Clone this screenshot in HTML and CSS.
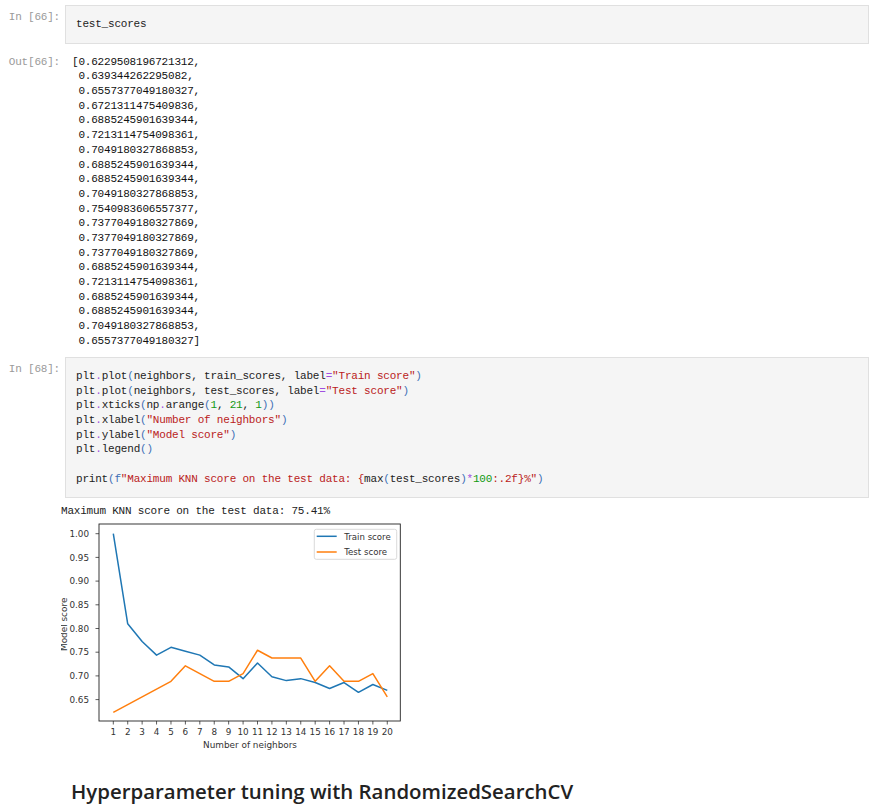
FILE: index.html
```html
<!DOCTYPE html>
<html>
<head>
<meta charset="utf-8">
<link rel="stylesheet" href="styles.css">
</head>
<body>
<div class="nb">
  <div class="cell cell-first">
    <div class="prompt">In [66]:</div>
    <div class="input"><pre class="code">test_scores</pre></div>
  </div>
  <div class="cell out-row">
    <div class="prompt">Out[66]:</div>
    <pre class="output">[0.6229508196721312,
 0.639344262295082,
 0.6557377049180327,
 0.6721311475409836,
 0.6885245901639344,
 0.7213114754098361,
 0.7049180327868853,
 0.6885245901639344,
 0.6885245901639344,
 0.7049180327868853,
 0.7540983606557377,
 0.7377049180327869,
 0.7377049180327869,
 0.7377049180327869,
 0.6885245901639344,
 0.7213114754098361,
 0.6885245901639344,
 0.6885245901639344,
 0.7049180327868853,
 0.6557377049180327]</pre>
  </div>
  <div class="cell cell-second">
    <div class="prompt">In [68]:</div>
    <div class="input"><pre class="code">plt<span class="op">.</span>plot<span class="br">(</span>neighbors, train_scores, label<span class="op">=</span><span class="st">"Train score"</span><span class="br">)</span>
plt<span class="op">.</span>plot<span class="br">(</span>neighbors, test_scores, label<span class="op">=</span><span class="st">"Test score"</span><span class="br">)</span>
plt<span class="op">.</span>xticks<span class="br">(</span>np<span class="op">.</span>arange<span class="br">(</span><span class="nu">1</span>, <span class="nu">21</span>, <span class="nu">1</span><span class="br">))</span>
plt<span class="op">.</span>xlabel<span class="br">(</span><span class="st">"Number of neighbors"</span><span class="br">)</span>
plt<span class="op">.</span>ylabel<span class="br">(</span><span class="st">"Model score"</span><span class="br">)</span>
plt<span class="op">.</span>legend<span class="br">()</span>

print<span class="br">(</span><span class="fx">f</span><span class="st">"Maximum KNN score on the test data: {</span>max<span class="br">(</span>test_scores<span class="br">)</span><span class="op">*</span><span class="nu">100</span><span class="st">:.2f}%"</span><span class="br">)</span></pre></div>
  </div>
  <div class="print-out">
    <pre class="output plain">Maximum KNN score on the test data: 75.41%</pre>
    <svg class="figure" width="350" height="240" viewBox="61 518 350 240" xmlns="http://www.w3.org/2000/svg">
      <rect x="61" y="518" width="350" height="240" fill="#ffffff"/>
      <g class="ticks" stroke="#333" stroke-width="0.8">
        <line x1="95.5" y1="532.7" x2="99" y2="532.7"/>
        <line x1="95.5" y1="556.4" x2="99" y2="556.4"/>
        <line x1="95.5" y1="580.1" x2="99" y2="580.1"/>
        <line x1="95.5" y1="603.8" x2="99" y2="603.8"/>
        <line x1="95.5" y1="627.5" x2="99" y2="627.5"/>
        <line x1="95.5" y1="651.2" x2="99" y2="651.2"/>
        <line x1="95.5" y1="674.9" x2="99" y2="674.9"/>
        <line x1="95.5" y1="698.6" x2="99" y2="698.6"/>
        <line x1="113.3" y1="720" x2="113.3" y2="723.5"/>
        <line x1="127.72" y1="720" x2="127.72" y2="723.5"/>
        <line x1="142.14" y1="720" x2="142.14" y2="723.5"/>
        <line x1="156.56" y1="720" x2="156.56" y2="723.5"/>
        <line x1="170.98" y1="720" x2="170.98" y2="723.5"/>
        <line x1="185.4" y1="720" x2="185.4" y2="723.5"/>
        <line x1="199.82" y1="720" x2="199.82" y2="723.5"/>
        <line x1="214.24" y1="720" x2="214.24" y2="723.5"/>
        <line x1="228.66" y1="720" x2="228.66" y2="723.5"/>
        <line x1="243.08" y1="720" x2="243.08" y2="723.5"/>
        <line x1="257.5" y1="720" x2="257.5" y2="723.5"/>
        <line x1="271.92" y1="720" x2="271.92" y2="723.5"/>
        <line x1="286.34" y1="720" x2="286.34" y2="723.5"/>
        <line x1="300.76" y1="720" x2="300.76" y2="723.5"/>
        <line x1="315.18" y1="720" x2="315.18" y2="723.5"/>
        <line x1="329.6" y1="720" x2="329.6" y2="723.5"/>
        <line x1="344.02" y1="720" x2="344.02" y2="723.5"/>
        <line x1="358.44" y1="720" x2="358.44" y2="723.5"/>
        <line x1="372.86" y1="720" x2="372.86" y2="723.5"/>
        <line x1="387.28" y1="720" x2="387.28" y2="723.5"/>
      </g>
      <g class="tl" text-anchor="end">
        <text x="89" y="535.9">1.00</text>
        <text x="89" y="559.6">0.95</text>
        <text x="89" y="583.3">0.90</text>
        <text x="89" y="607">0.85</text>
        <text x="89" y="630.7">0.80</text>
        <text x="89" y="654.4">0.75</text>
        <text x="89" y="678.1">0.70</text>
        <text x="89" y="701.8">0.65</text>
      </g>
      <g class="tl" text-anchor="middle">
        <text x="113.3" y="733.5">1</text>
        <text x="127.72" y="733.5">2</text>
        <text x="142.14" y="733.5">3</text>
        <text x="156.56" y="733.5">4</text>
        <text x="170.98" y="733.5">5</text>
        <text x="185.4" y="733.5">6</text>
        <text x="199.82" y="733.5">7</text>
        <text x="214.24" y="733.5">8</text>
        <text x="228.66" y="733.5">9</text>
        <text x="243.08" y="733.5">10</text>
        <text x="257.5" y="733.5">11</text>
        <text x="271.92" y="733.5">12</text>
        <text x="286.34" y="733.5">13</text>
        <text x="300.76" y="733.5">14</text>
        <text x="315.18" y="733.5">15</text>
        <text x="329.6" y="733.5">16</text>
        <text x="344.02" y="733.5">17</text>
        <text x="358.44" y="733.5">18</text>
        <text x="372.86" y="733.5">19</text>
        <text x="387.28" y="733.5">20</text>
      </g>
      <text class="al" x="250" y="746.5" text-anchor="middle">Number of neighbors</text>
      <text class="al" x="67.5" y="623.3" text-anchor="middle" transform="rotate(-90 67.5 623.3)">Model score</text>
      <polyline fill="none" stroke="#1f77b4" stroke-width="1.5" stroke-linejoin="round" points="113.3,532.7 127.72,622.8 142.14,640.43 156.56,654.14 170.98,646.3 185.4,650.22 199.82,654.14 214.24,663.93 228.66,665.89 243.08,677.64 257.5,661.97 271.92,675.68 286.34,679.6 300.76,677.64 315.18,681.56 329.6,687.44 344.02,681.56 358.44,691.35 372.86,683.52 387.28,689.39"/>
      <polyline fill="none" stroke="#ff7f0e" stroke-width="1.5" stroke-linejoin="round" points="113.3,711.42 127.72,703.65 142.14,695.88 156.56,688.11 170.98,680.34 185.4,664.8 199.82,672.57 214.24,680.34 228.66,680.34 243.08,672.57 257.5,649.26 271.92,657.03 286.34,657.03 300.76,657.03 315.18,680.34 329.6,664.8 344.02,680.34 358.44,680.34 372.86,672.57 387.28,695.88"/>
      <rect x="99" y="523" width="301.3" height="197" fill="none" stroke="#222" stroke-width="0.9"/>
      <rect x="314.3" y="528.3" width="82.4" height="30" rx="2" fill="#ffffff" fill-opacity="0.85" stroke="#d0d0d0" stroke-width="0.8"/>
      <line x1="316.7" y1="535.3" x2="336.7" y2="535.3" stroke="#1f77b4" stroke-width="1.5"/>
      <line x1="316.7" y1="551" x2="336.7" y2="551" stroke="#ff7f0e" stroke-width="1.5"/>
      <text class="lg" x="344.3" y="538.5">Train score</text>
      <text class="lg" x="344.3" y="554.2">Test score</text>
    </svg>
  </div>
  <h3 class="heading">Hyperparameter tuning with RandomizedSearchCV</h3>
</div>
</body>
</html>
```

FILE: styles.css
```css
html, body {
  margin: 0;
  padding: 0;
  background: #ffffff;
}

.nb {
  padding-top: 5px;
  padding-right: 19px;
}

.cell {
  display: flex;
  align-items: flex-start;
}

.prompt {
  width: 60px;
  flex: none;
  text-align: right;
  padding-top: 4.7px;
  color: #9a9a9a;
  font-family: "Liberation Mono", "DejaVu Sans Mono", monospace;
  font-size: 11px;
  letter-spacing: -0.2px;
  line-height: 14.68px;
  white-space: nowrap;
}

.input {
  flex: 1;
  margin-left: 5px;
  background: #f5f5f5;
  border: 1px solid #e0e0e0;
  padding: 11px 10px;
}

.cell-second .input {
  padding: 10.8px 10px;
}

.code, .output {
  margin: 0;
  font-family: "Liberation Mono", "DejaVu Sans Mono", monospace;
  font-size: 11px;
  letter-spacing: -0.2px;
  line-height: 14.68px;
  color: #222;
  white-space: pre;
}

.out-row {
  margin-top: 11px;
}

.out-row .prompt {
  padding-top: 0;
}

.out-row .output {
  margin-left: 12px;
  color: #111;
}

.cell-second {
  margin-top: 8.7px;
}

.op { color: #a050e0; }
.br { color: #3d6fb6; }
.st { color: #ba2121; }
.nu { color: #119911; }
.fx { color: #3d6fb6; }

.print-out {
  margin-left: 61px;
  margin-top: 5.7px;
}

.print-out .plain {
  color: #222;
}

.figure {
  display: block;
}

.figure .tl {
  font-family: "DejaVu Sans", sans-serif;
  font-size: 8.8px;
  fill: #333;
}

.figure .al {
  font-family: "DejaVu Sans", sans-serif;
  font-size: 8.9px;
  fill: #333;
}

.figure .lg {
  font-family: "DejaVu Sans", sans-serif;
  font-size: 8.6px;
  fill: #333;
}

.heading {
  margin: 18px 0 0 71px;
  font-family: "Open Sans", "Noto Sans", sans-serif;
  font-weight: 600;
  font-size: 20.4px;
  line-height: 28px;
  color: #222;
}
```
